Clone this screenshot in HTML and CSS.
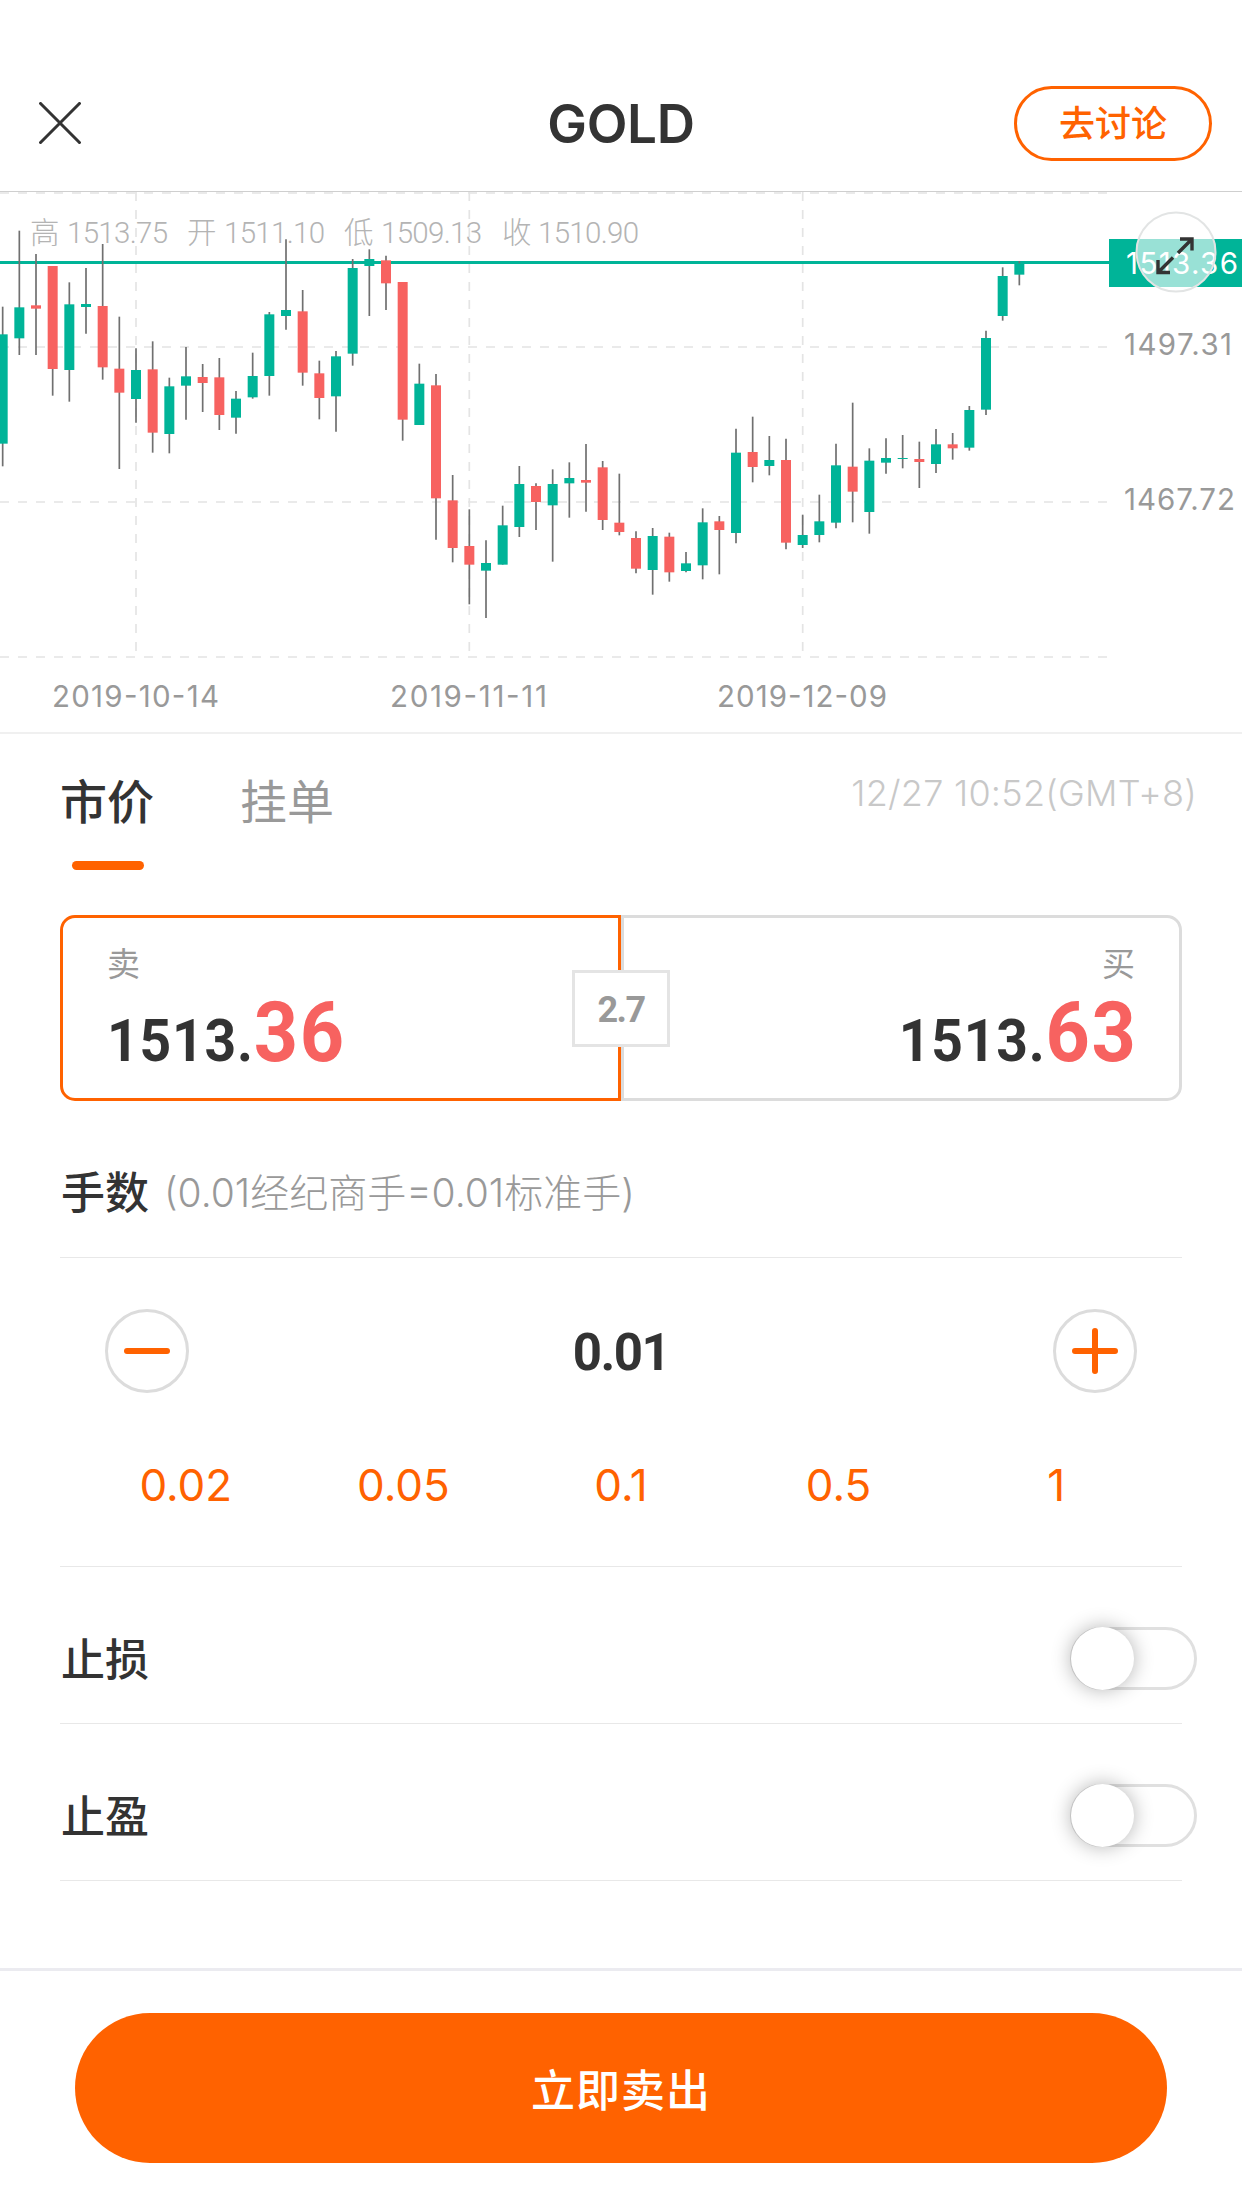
FILE: index.html
```html
<!DOCTYPE html>
<html lang="zh-CN">
<head>
<meta charset="utf-8">
<title>GOLD</title>
<link rel="stylesheet" href="styles.css">
</head>
<body>
<header class="header">
  <svg class="close" viewBox="0 0 42 42"><path d="M0.500 0.500L41.500 41.500M41.500 0.500L0.500 41.500"/></svg>
  <h1 class="title">GOLD</h1>
  <button class="discuss">去讨论</button>
</header>

<svg class="chart" viewBox="0 192 1242 540">
  <g class="grid">
    <path d="M0 193H1109M0 347H1109M0 502H1109M0 657H1109M136 192V652M469.3 192V652M802.7 192V652"/>
  </g>
  <path class="price-line" d="M0 262.5H1110"/>
  <g id="candles"></g>
  <g class="ohlc">
    <text x="30" y="243" textLength="29">高</text><text x="67" y="243" textLength="101">1513.75</text>
    <text x="187" y="243" textLength="29">开</text><text x="224" y="243" textLength="101">1511.10</text>
    <text x="344" y="243" textLength="29">低</text><text x="381" y="243" textLength="101">1509.13</text>
    <text x="502" y="243" textLength="29">收</text><text x="538" y="243" textLength="101">1510.90</text>
  </g>
  <g class="axis">
    <text x="1124" y="355" textLength="108">1497.31</text>
    <text x="1124" y="510" textLength="111">1467.72</text>
    <text x="52" y="707" textLength="167">2019-10-14</text>
    <text x="390" y="707" textLength="157">2019-11-11</text>
    <text x="717" y="707" textLength="170">2019-12-09</text>
  </g>
  <rect class="tag" x="1109" y="239" width="133" height="48"/>
  <text class="tag-text" x="1126" y="274" textLength="112">1513.36</text>
  <circle class="expand" cx="1176" cy="252" r="39.5"/>
  <path class="expand-icon" d="M1180 239H1192V250.500M1192 239L1178 253M1158 260V272.500H1170M1158 272.500L1173 257.500"/>
</svg>

<main class="panel">
  <section class="tabs">
    <div class="tab tab-on">市价</div>
    <div class="tab">挂单</div>
    <div class="time">12/27 10:52(GMT+8)</div>
  </section>

  <section class="quotes">
    <div class="quote sell">
      <span class="side">卖</span>
      <div class="price"><span class="int">1513.</span><span class="frac">36</span></div>
    </div>
    <div class="quote buy">
      <span class="side">买</span>
      <div class="price"><span class="int">1513.</span><span class="frac">63</span></div>
    </div>
    <div class="spread">2.7</div>
  </section>

  <section class="lots-head">
    <span class="label">手数</span>
    <span class="hint">(0.01经纪商手=0.01标准手)</span>
  </section>

  <section class="lots">
    <div class="stepper">
      <button class="round"><svg viewBox="0 0 46 46"><path d="M3 23H43"/></svg></button>
      <span class="amount">0.01</span>
      <button class="round"><svg viewBox="0 0 46 46"><path d="M3 23H43M23 3V43"/></svg></button>
    </div>
    <div class="presets"><span>0.02</span><span>0.05</span><span>0.1</span><span>0.5</span><span>1</span></div>
  </section>

  <section class="option"><span class="label">止损</span><div class="switch"><i class="knob"></i></div></section>
  <section class="option"><span class="label">止盈</span><div class="switch"><i class="knob"></i></div></section>
</main>

<footer class="footer"><button class="submit">立即卖出</button></footer>
<script src="chart.js"></script>
</body>
</html>
```

FILE: styles.css
```css
* { box-sizing: border-box; }
body {
  margin: 0;
  width: 1242px;
  height: 2208px;
  display: flex;
  flex-direction: column;
  background: #fff;
  color: #333;
  font-family: Inter, "Noto Sans CJK SC", sans-serif;
  overflow: hidden;
}
button { font: inherit; padding: 0; background: none; cursor: pointer; }

.header {
  display: grid;
  grid-template-columns: 198px 1fr 198px;
  align-items: center;
  height: 192px;
  padding: 55px 30px 0;
  border-bottom: 1px solid #cfcfcf;
}
.close { width: 42px; height: 42px; margin-left: 9px; fill: none; stroke: #333; stroke-width: 3; }
.title { margin: 0; padding-top: 1px; text-align: center; font-size: 53px; line-height: 60px; font-weight: 600; letter-spacing: -0.3px; }
.discuss {
  height: 75px;
  padding-top: 2px;
  border: 3px solid #ff6200;
  border-radius: 38px;
  color: #ff6200;
  font-size: 36px;
  line-height: 66px;
  font-weight: 500;
}

.chart { display: block; width: 1242px; height: 542px; flex: none; border-bottom: 2px solid #f0f0f0; }
.grid { fill: none; stroke: #e4e4e4; stroke-width: 1.7; stroke-dasharray: 9 9; }
.price-line { stroke: #00b498; stroke-width: 3; }
.wick { stroke: #707070; stroke-width: 1.7; }
.up { fill: #00b498; }
.down { fill: #f76260; }
.ohlc { font: 300 29.5px Roboto, "Noto Sans CJK SC", sans-serif; fill: #b4b4b4; }
.axis { font-size: 29.5px; fill: #999; }
.tag { fill: #00b498; }
.tag-text { font-size: 29.5px; fill: #fff; }
.expand { fill: rgba(255, 255, 255, .6); stroke: #e2e4e4; stroke-width: 2; }
.expand-icon { fill: none; stroke: #333; stroke-width: 3.4; }

.panel { flex: 1; padding: 0 60px; }
.tabs { display: flex; gap: 86px; height: 181px; padding-top: 38px; }
.tab { position: relative; width: 94px; height: 98px; color: #999; font-size: 47px; line-height: 60px; }
.tab-on { color: #333; font-weight: 500; }
.tab-on::after {
  content: "";
  position: absolute;
  left: 12px;
  bottom: 0;
  width: 72px;
  height: 9px;
  border-radius: 5px;
  background: #ff6200;
}
.time { margin: -1px -15px 0 auto; color: #c8c8c8; font-size: 36px; line-height: 44px; font-weight: 300; letter-spacing: .25px; }

.quotes { position: relative; display: grid; grid-template-columns: 561px 561px; height: 186px; }
.quote { display: flex; flex-direction: column; padding: 26px 44px 0; border: 3px solid #dcdcdc; }
.sell { border-color: #ff6200; border-radius: 15px 0 0 15px; }
.buy { align-items: flex-end; border-radius: 0 15px 15px 0; }
.side { color: #999; font-size: 33px; line-height: 40px; }
.price {
  display: flex;
  align-items: baseline;
  margin-top: 9px;
  font-family: Roboto, sans-serif;
  font-weight: 700;
  line-height: 80px;
  transform: scaleX(.92);
  transform-origin: left;
}
.buy .price { margin-right: -3px; transform-origin: right; }
.int { font-size: 60px; letter-spacing: .9px; }
.frac { color: #f76260; font-size: 84px; letter-spacing: 1.8px; }
.spread {
  position: absolute;
  left: 512px;
  top: 55px;
  width: 98px;
  height: 77px;
  border: 3px solid #e4e4e4;
  background: #fff;
  color: #999;
  text-align: center;
  font: 700 36px/74px Roboto, sans-serif;
  letter-spacing: -1.5px;
}

.lots-head { display: flex; align-items: center; gap: 15px; height: 157px; padding: 22px 0 0 1px; border-bottom: 1px solid #e8e8e8; }
.label { font-size: 44px; font-weight: 500; }
.hint { color: #999; font-size: 39px; font-weight: 300; }

.lots { height: 309px; padding-top: 51px; border-bottom: 1px solid #e8e8e8; }
.stepper { display: flex; align-items: center; justify-content: space-between; padding: 0 45px; }
.round { display: grid; place-items: center; width: 84px; height: 84px; border: 3px solid #dcdcdc; border-radius: 50%; }
.round svg { width: 46px; height: 46px; fill: none; stroke: #ff6200; stroke-width: 6; stroke-linecap: round; }
.amount { padding-top: 4px; font: 700 51px/60px Roboto, sans-serif; letter-spacing: -1.5px; }
.presets {
  display: grid;
  grid-template-columns: repeat(5, 1fr);
  margin: 62px 17px 0;
  color: #ff6200;
  text-align: center;
  font-size: 44px;
  line-height: 60px;
  font-weight: 400;
}

.option { display: flex; align-items: center; justify-content: space-between; height: 157px; padding: 27px 0 0 1px; border-bottom: 1px solid #e8e8e8; }
.option .label { margin-top: -3px; }
.switch { width: 127px; height: 63px; margin-right: -15px; border: 3px solid #e0e0e0; border-radius: 32px; }
.knob { display: block; width: 63px; height: 63px; margin: -3px -2px; border-radius: 50%; background: #fff; box-shadow: 0 0 20px rgba(0, 0, 0, .3); }

.footer { height: 240px; padding: 42px 75px 0; border-top: 3px solid #ebebf0; }
.submit {
  display: block;
  width: 100%;
  height: 150px;
  border: 0;
  border-radius: 75px;
  background: #ff6200;
  color: #fff;
  font-size: 44px;
  font-weight: 500;
  letter-spacing: 1px;
}
```

FILE: chart.js
```js
// Each candle: [high, body top, body bottom, low, direction], in thirds of a pixel below y = 190.
const candles = [
  [350,433,761,829,1],[122,352,445,495,1],[192,346,356,495,0],[228,228,537,617,0],
  [277,343,540,635,1],[234,342,351,431,1],[162,348,532,569,0],[380,536,608,837,0],
  [475,540,627,698,1],[454,538,728,788,0],[563,589,732,790,1],[471,559,587,689,1],
  [522,561,579,666,0],[504,562,675,720,0],[603,626,683,731,1],[488,558,622,626,1],
  [366,373,558,617,1],[148,360,378,419,1],[300,364,548,587,0],[512,550,624,688,0],
  [483,499,619,725,1],[207,234,491,527,1],[178,207,228,378,1],[197,211,280,360,0],
  [276,276,689,752,0],[521,581,705,705,1],[552,586,925,1049,0],[855,931,1074,1117,0],
  [958,1068,1124,1243,0],[1051,1119,1142,1284,1],[947,1006,1124,1124,1],[828,882,1011,1041,1],
  [880,888,936,1020,0],[838,882,946,1115,1],[817,864,880,983,1],[762,870,878,965,0],
  [813,832,990,1020,0],[851,998,1026,1036,0],[1024,1044,1136,1150,0],[1014,1038,1140,1214,1],
  [1028,1040,1147,1175,0],[1086,1120,1143,1147,1],[955,997,1126,1168,1],[978,994,1020,1153,0],
  [716,788,1029,1060,1],[680,786,831,877,0],[738,810,828,856,1],[746,810,1058,1078,0],
  [974,1035,1065,1074,1],[914,994,1035,1057,1],[761,826,998,1015,1],[638,830,905,997,0],
  [775,812,966,1031,1],[745,804,818,851,1],[735,804,807,835,1],[755,807,816,894,0],
  [717,763,822,849,1],[729,763,775,809,0],[648,660,773,782,1],[422,444,659,675,1],
  [232,258,378,392,1],[213,220,254,286,1]
];
const y = v => (190 + v / 3).toFixed(2);
document.getElementById('candles').innerHTML = candles.map(([hi, top, bottom, lo, up], i) => {
  const x = 2.67 + i * 50 / 3;
  return `<path class="wick" d="M${x} ${y(hi)}V${y(lo)}"/>` +
    `<rect class="${up ? 'up' : 'down'}" x="${x - 5}" y="${y(top)}" width="10" height="${(bottom - top) / 3}"/>`;
}).join('');
```
